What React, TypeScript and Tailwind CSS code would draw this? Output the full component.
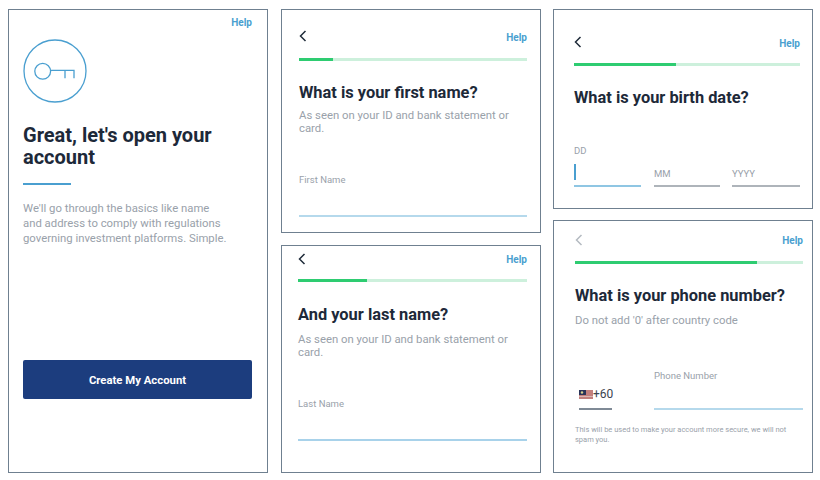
const font = "font-['Roboto',sans-serif]";

function Help({ cls = "" }: { cls?: string }) {
  return <span className={`text-[10px] leading-3 font-bold text-[#4a9fd0] ${cls}`}>Help</span>;
}

function Back({ muted }: { muted?: boolean }) {
  return (
    <svg width="8" height="12" viewBox="0 0 8 12" fill="none" stroke={muted ? "#b4bac1" : "#1f2b3a"} strokeWidth="1.5">
      <path d="M6.5 1 L1.5 6 L6.5 11" />
    </svg>
  );
}

function Progress({ value }: { value: string }) {
  return (
    <div className="h-[3px] w-full bg-[#cdf0dc]">
      <div className={`h-full bg-[#2ecc71] ${value}`} />
    </div>
  );
}

function Flag() {
  return (
    <svg width="14" height="9" viewBox="0 0 14 9" className="shrink-0">
      <rect width="14" height="9" fill="#c27f7c" />
      <rect y="6" width="14" height="1" fill="#d9b5b3" />
      <rect width="7" height="5" fill="#2a3358" />
      <circle cx="3" cy="2.5" r="1.2" fill="#d8cf8e" />
    </svg>
  );
}

const title = "text-[16.4px] leading-6 font-bold text-[#1d2939]";
const sub = "text-[11.33px] leading-[13px] text-[#99a1aa]";
const label = "text-[9.5px] leading-3 text-[#99a1aa]";

export default function App() {
  return (
    <div className={`${font} flex h-[480px] w-[820px] bg-white pl-2 pt-[9px]`}>
      {/* Welcome */}
      <div className="flex h-[464px] w-[260px] flex-col border border-[#6f8090] bg-white pl-[14px] pr-[15px]">
        <div className="flex justify-end pt-[7px]"><Help /></div>
        <svg width="64" height="64" viewBox="0 0 64 64" fill="none" stroke="#4a9fd0" className="mt-[10px] shrink-0">
          <circle cx="32" cy="32" r="31" strokeWidth="1.3" />
          <circle cx="19.7" cy="32.3" r="7.9" strokeWidth="1.3" />
          <path d="M27.6 31.3 H51 V39.3 M42 31.3 V39.3" strokeWidth="1.3" />
        </svg>
        <h1 className="mt-[21px] text-[20px] leading-[22px] font-bold text-[#1d2939]">Great, let's open your account</h1>
        <div className="mt-[15px] h-[2px] w-12 bg-[#4a9fd0]" />
        <p className="mt-4 max-w-[206px] text-[11.33px] leading-[15px] text-[#99a1aa]">We'll go through the basics like name and address to comply with regulations governing investment platforms. Simple.</p>
        <button className="mt-[114px] h-[39px] w-full rounded-[2px] bg-[#1c3d7e] pt-[1px] text-[11.33px] font-bold text-white">Create My Account</button>
      </div>

      {/* Names */}
      <div className="ml-[13px] flex w-[260px] flex-col gap-3">
        <div className="h-[224px] border border-[#6f8090] pl-[17px] pr-[13px] pt-5">
          <div className="flex items-start justify-between"><Back /><Help cls="mt-[2px]" /></div>
          <div className="mt-[14px]"><Progress value="w-[15%]" /></div>
          <h2 className={`mt-5 ${title}`}>What is your first name?</h2>
          <p className={`mt-1 ${sub}`}>As seen on your ID and bank statement or card.</p>
          <div className={`mt-[39px] ${label}`}>First Name</div>
          <div className="mt-[29px] h-[2px] bg-[#b5d9ec]" />
        </div>
        <div className="h-[228px] border border-[#6f8090] pl-4 pr-[13px] pt-[7px]">
          <div className="flex items-start justify-between"><Back /><Help cls="mt-px" /></div>
          <div className="mt-[13px]"><Progress value="w-[30%]" /></div>
          <h2 className={`mt-[21px] ${title}`}>And your last name?</h2>
          <p className={`mt-[6px] ${sub}`}>As seen on your ID and bank statement or card.</p>
          <div className={`mt-[39px] ${label}`}>Last Name</div>
          <div className="mt-[29px] h-[2px] bg-[#a8d2ea]" />
        </div>
      </div>

      {/* Birth date, phone */}
      <div className="ml-3 flex w-[260px] flex-col gap-[11px]">
        <div className="h-[200px] border border-[#6f8090] pl-5 pr-3 pt-[26px]">
          <div className="flex items-start justify-between"><Back /><Help cls="mt-[2px]" /></div>
          <div className="mt-[13px]"><Progress value="w-[45%]" /></div>
          <h2 className={`mt-5 ${title}`}>What is your birth date?</h2>
          <div className="mt-[35px] flex items-end">
            <div className="w-[67px]">
              <div className={label}>DD</div>
              <div className="mt-[6px] h-[24px] border-b-2 border-[#8fc6e3] pt-[1px]"><div className="h-4 w-[2px] bg-[#4a9fd0]" /></div>
            </div>
            <div className="ml-[13px] w-[66px] border-b-2 border-[#aeb4ba] pb-[5px]"><div className={label}>MM</div></div>
            <div className="ml-3 w-[68px] border-b-2 border-[#aeb4ba] pb-[5px]"><div className={label}>YYYY</div></div>
          </div>
        </div>
        <div className="h-[253px] border border-[#6f8090] pl-[21px] pr-[9px] pt-[13px]">
          <div className="flex items-start justify-between"><Back muted /><Help cls="mt-px" /></div>
          <div className="mt-[14px]"><Progress value="w-[80%]" /></div>
          <h2 className={`mt-5 ${title}`}>What is your phone number?</h2>
          <p className={`mt-[5px] leading-[14px] ${sub}`}>Do not add '0' after country code</p>
          <div className="mt-[43px] flex items-end gap-[42px]">
            <div className="ml-[4px] w-[33px] shrink-0 border-b-2 border-[#7f8a96] pb-[7px]">
              <div className="flex items-center text-[12px] leading-[14px] text-[#3b4450]"><Flag /><span>+60</span></div>
            </div>
            <div className="flex-1">
              <div className={label}>Phone Number</div>
              <div className="mt-[26px] h-[2px] bg-[#b5d9ec]" />
            </div>
          </div>
          <p className="mt-[15px] text-[7.5px] leading-[10px] text-[#99a1aa]">This will be used to make your account more secure, we will not spam you.</p>
        </div>
      </div>
    </div>
  );
}
